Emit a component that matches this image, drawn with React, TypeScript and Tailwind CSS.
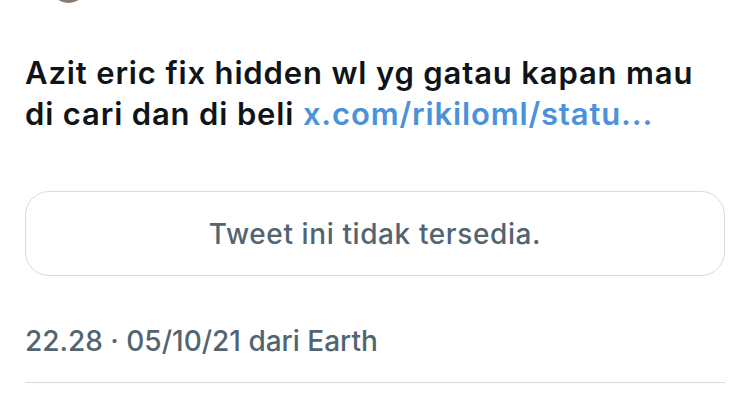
import React from "react";

const App = () => {
  return (
    <div
      className="w-[750px] h-[403px] bg-white overflow-hidden relative"
      style={{ fontFamily: "Inter, 'Noto Sans', sans-serif" }}
    >
      {/* bottom edge of avatar from the row above */}
      <div className="absolute left-[50px] top-[-34px] w-[37px] h-[37px] rounded-full bg-[#8a7b70]" />

      <div className="px-[25px] pt-[52px]">
        <p className="text-[31px] leading-[41px] font-semibold text-[#0f1419] tracking-[0.85px] whitespace-nowrap">
          Azit eric fix hidden wl yg gatau kapan mau
          <br />
          di cari dan di beli{" "}
          <a className="text-[#4a92db]" href="#">
            x.com/rikiloml/statu...
          </a>
        </p>

        <div className="mt-[57px] h-[85px] rounded-[24px] border border-[#d8dce0] flex items-center justify-center">
          <span className="text-[28px] text-[#536471] font-medium tracking-[0.6px]">
            Tweet ini tidak tersedia.
          </span>
        </div>

        <div className="mt-[48px] text-[28px] text-[#536471] font-medium leading-[34px]">
          22.28 · 05/10/21 dari Earth
        </div>

        <div className="mt-[24px] border-t border-[#d8dce0]" />
      </div>
    </div>
  );
};

export default App;
